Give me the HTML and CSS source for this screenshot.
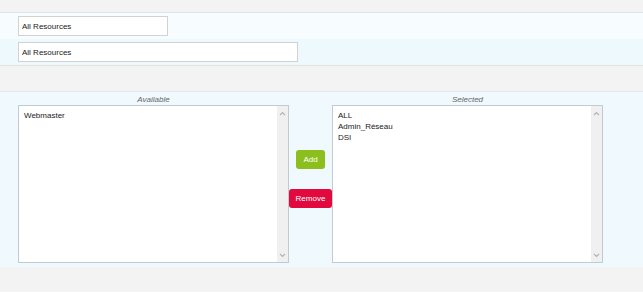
FILE: index.html
```html
<!DOCTYPE html>
<html lang="en">
<head>
    <meta charset="UTF-8">
    <title>Resources</title>
    <link rel="stylesheet" href="styles.css">
</head>
<body>
    <div class="band band-top"></div>

    <div class="row row-light">
        <input type="text" class="field field-short" value="All Resources">
    </div>
    <div class="row row-blue">
        <input type="text" class="field field-long" value="All Resources">
    </div>

    <div class="band band-mid"></div>

    <!-- Available / Selected picker -->
    <div class="picker">
        <div class="pick-col">
            <div class="pick-label">Available</div>
            <div class="list">
                <div class="list-items">
                    <div>Webmaster</div>
                </div>
                <div class="scroll">
                    <svg width="7" height="5" viewBox="0 0 7 5"><path d="M1 4 L3.5 1.5 L6 4" fill="none" stroke="#b4b4b4" stroke-width="1.2"/></svg>
                    <svg width="7" height="5" viewBox="0 0 7 5"><path d="M1 1 L3.5 3.5 L6 1" fill="none" stroke="#b4b4b4" stroke-width="1.2"/></svg>
                </div>
            </div>
        </div>

        <div class="pick-actions">
            <button class="btn btn-add">Add</button>
            <button class="btn btn-remove">Remove</button>
        </div>

        <div class="pick-col">
            <div class="pick-label">Selected</div>
            <div class="list">
                <div class="list-items">
                    <div>ALL</div>
                    <div>Admin_Réseau</div>
                    <div>DSI</div>
                </div>
                <div class="scroll">
                    <svg width="7" height="5" viewBox="0 0 7 5"><path d="M1 4 L3.5 1.5 L6 4" fill="none" stroke="#b4b4b4" stroke-width="1.2"/></svg>
                    <svg width="7" height="5" viewBox="0 0 7 5"><path d="M1 1 L3.5 3.5 L6 1" fill="none" stroke="#b4b4b4" stroke-width="1.2"/></svg>
                </div>
            </div>
        </div>
    </div>

    <div class="band band-bottom"></div>
</body>
</html>
```

FILE: styles.css
```css
body {
    margin: 0;
    font-family: "Liberation Sans", Arial, sans-serif;
    font-size: 8px;
    color: #222;
    background-color: #fff;
}
.band {
    background-color: #f3f3f3;
}
.band-top {
    height: 12px;
    border-bottom: 1px solid #e4e4e4;
}
.band-mid {
    height: 25px;
    border-top: 1px solid #e2e2e2;
    border-bottom: 1px solid #e6e6e6;
}
.band-bottom {
    height: 25px;
}
.row {
    height: 26px;
    padding-left: 18px;
    display: flex;
    align-items: center;
    box-sizing: border-box;
}
.row-light {
    background-color: #f7fdff;
}
.row-blue {
    background-color: #eef9fe;
}
.field {
    height: 20px;
    box-sizing: border-box;
    border: 1px solid #d2d2d2;
    padding: 0 3px;
    font-family: "Liberation Sans", Arial, sans-serif;
    font-size: 8px;
    color: #222;
    background-color: #fff;
    outline: none;
}
.field-short {
    width: 150px;
}
.field-long {
    width: 280px;
}
.picker {
    background-color: #eff9fe;
    padding: 0 0 4px 18px;
    display: flex;
}
.pick-col {
    width: 271px;
    display: flex;
    flex-direction: column;
}
.pick-label {
    height: 13px;
    line-height: 15px;
    text-align: center;
    font-style: italic;
    color: #666;
}
.list {
    height: 158px;
    box-sizing: border-box;
    border: 1px solid #c3cbd2;
    background-color: #fff;
    display: flex;
}
.list-items {
    flex: 1;
    padding: 4px 5px;
    line-height: 11px;
}
.scroll {
    width: 11px;
    background-color: #f0f0f0;
    display: flex;
    flex-direction: column;
    justify-content: space-between;
    align-items: center;
    padding: 5px 0 4px;
}
.pick-actions {
    width: 43px;
    padding-top: 58px;
    display: flex;
    flex-direction: column;
    align-items: center;
    gap: 20px;
}
.btn {
    height: 19px;
    border: none;
    border-radius: 3px;
    color: #fff;
    font-family: "Liberation Sans", Arial, sans-serif;
    font-size: 8px;
    padding: 0;
    cursor: pointer;
}
.btn-add {
    width: 29px;
    background-color: #8cbf1d;
}
.btn-remove {
    width: 43px;
    background-color: #e2093e;
}
```
